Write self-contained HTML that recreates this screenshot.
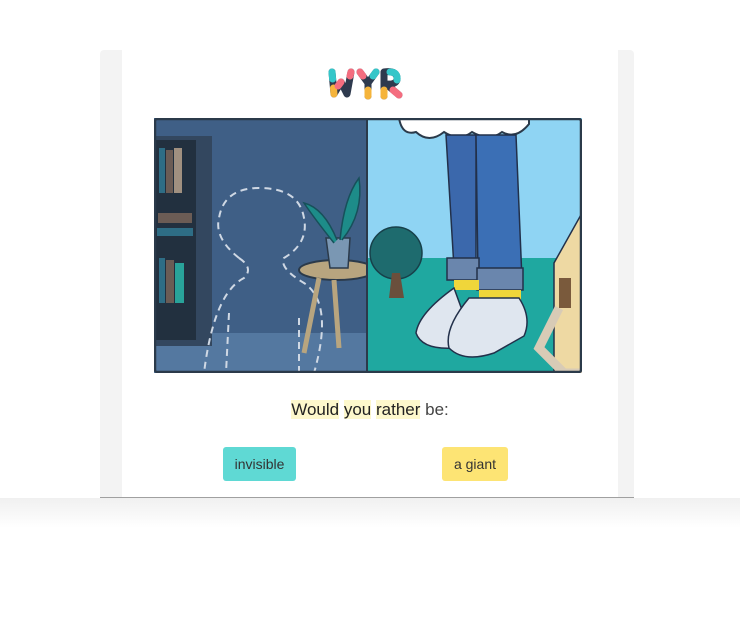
<!DOCTYPE html>
<html><head><style>
body{margin:0;width:740px;height:630px;background:#fff;position:relative;overflow:hidden;font-family:"Liberation Sans",sans-serif}
.frame{position:absolute;left:100px;top:50px;width:534px;height:447px;background:#f3f3f3;border-radius:4px 4px 0 0}
.inner{position:absolute;left:122px;top:50px;width:496px;height:447px;background:#fff}
.line{position:absolute;left:100px;top:497px;width:534px;height:1px;background:#a0a0a0}
.shadow{position:absolute;left:0;top:498px;width:740px;height:30px;background:linear-gradient(#f0f0f0,#fff)}
.q{position:absolute;left:0;width:740px;top:400px;text-align:center;font-size:17px;color:#222}
.q span.h{background:#fdf8cc}
.q span.b{color:#444}
.btn{position:absolute;top:447px;height:34px;line-height:34px;text-align:center;font-size:14px;color:#333;border-radius:3px}
</style></head><body>
<div class="frame"></div><div class="inner"></div>
<div class="line"></div><div class="shadow"></div>
<svg style="position:absolute;left:326px;top:64px" width="84" height="40" viewBox="0 0 84 40">
<g stroke-linecap="round" stroke-linejoin="round" fill="none" stroke-width="7">
<path d="M6 8 L8 30 L15 18 L21 30 L25 8" stroke="#2e3a4e"/>
<path d="M6 8 L6.6 15" stroke="#35c6c9"/><path d="M7.5 24 L8 30" stroke="#f5b43b"/><path d="M12 22 L15 18" stroke="#f46d7f"/><path d="M24 12 L25 8" stroke="#f46d7f"/>
<path d="M34 8 L42 19 L50 8 M42 19 L42 32" stroke="#2e3a4e"/>
<path d="M34 8 L37 12" stroke="#f46d7f"/><path d="M42 26 L42 32" stroke="#f5b43b"/><path d="M47 12 L50 8" stroke="#35c6c9"/>
<path d="M58 32 L58 8 Q72 6 71 16 Q69 21 60 20 L73 31" stroke="#2e3a4e"/>
<path d="M64 8 Q72 8 71 16" stroke="#35c6c9"/><path d="M67 26 L73 31" stroke="#f46d7f"/><path d="M58 26 L58 32" stroke="#f5b43b"/>
</g></svg>
<svg style="position:absolute;left:154px;top:118px" width="428" height="255" viewBox="0 0 428 255">
<rect x="0" y="0" width="213" height="255" fill="#3f5f86"/>
<rect x="0" y="215" width="213" height="40" fill="#5478a0"/>
<rect x="0" y="18" width="58" height="210" fill="#33475f"/>
<rect x="2" y="22" width="40" height="200" fill="#22303f"/>
<rect x="5" y="30" width="6" height="45" fill="#2e6d85"/><rect x="12" y="32" width="7" height="43" fill="#6b5c55"/><rect x="20" y="30" width="8" height="45" fill="#a09080"/>
<rect x="4" y="95" width="34" height="10" fill="#6b5c55"/><rect x="3" y="110" width="36" height="8" fill="#2e6d85"/>
<rect x="5" y="140" width="6" height="45" fill="#2e6d85"/><rect x="12" y="142" width="8" height="43" fill="#6b5c55"/><rect x="21" y="145" width="9" height="40" fill="#29a39a"/>
<g fill="none" stroke="#cfd8e4" stroke-width="2" stroke-dasharray="7 5">
<path d="M85 140 Q60 120 65 100 Q70 70 105 70 Q145 70 150 100 Q155 125 130 140 Q125 150 150 165 Q180 185 160 255"/>
<path d="M85 140 Q100 150 90 160 Q60 175 50 255"/><path d="M75 195 L72 255"/><path d="M145 200 L145 255"/>
</g>
<ellipse cx="183" cy="152" rx="38" ry="10" fill="#b8a57f" stroke="#2b3a4a" stroke-width="2"/>
<path d="M165 160 L150 235 M180 162 L185 230" stroke="#b8a57f" stroke-width="5"/>
<path d="M172 120 L196 120 L194 150 L176 150 Z" fill="#7a97b3" stroke="#2b3a4a" stroke-width="1.5"/>
<path d="M180 125 Q160 100 150 85 Q170 90 183 122 M186 122 Q190 80 205 60 Q210 95 188 122" fill="#1d8c89" stroke="#17505a" stroke-width="1.5"/>
<rect x="213" y="0" width="215" height="255" fill="#8fd4f3"/>
<rect x="213" y="140" width="215" height="115" fill="#1fa8a0"/>
<path d="M245 0 Q248 18 262 14 Q275 26 290 14 Q305 24 318 14 Q335 24 348 14 Q362 22 375 6 L375 0 Z" fill="#fff" stroke="#2b3a4a" stroke-width="2"/>
<path d="M292 17 L300 150 L322 150 L322 17 Z" fill="#3b68ac" stroke="#22304a" stroke-width="1.5"/>
<path d="M322 17 L324 160 L368 162 L362 17 Z" fill="#3b6fb5" stroke="#22304a" stroke-width="1.5"/>
<rect x="293" y="140" width="32" height="22" fill="#6a86ad" stroke="#22304a" stroke-width="1.5"/>
<rect x="323" y="150" width="46" height="22" fill="#6a86ad" stroke="#22304a" stroke-width="1.5"/>
<rect x="300" y="162" width="25" height="10" fill="#f0d63a"/><rect x="325" y="172" width="42" height="10" fill="#f0d63a"/>
<path d="M300 170 Q265 195 262 215 Q268 232 300 230 L320 225 Z" fill="#dfe6ef" stroke="#22304a" stroke-width="1.5"/>
<path d="M315 180 Q290 210 295 230 Q310 245 340 235 L370 218 Q378 200 365 180 Z" fill="#dfe6ef" stroke="#22304a" stroke-width="1.5"/>
<circle cx="242" cy="135" r="26" fill="#1e6b6e" stroke="#17404a" stroke-width="1.5"/>
<path d="M238 155 L235 180 L250 180 L246 155 Z" fill="#6a4f3c"/>
<path d="M400 145 L428 95 L428 255 L400 255 Z" fill="#eed9a3" stroke="#22304a" stroke-width="1.5"/>
<rect x="405" y="160" width="12" height="30" fill="#7a5a3c"/>
<path d="M405 190 Q395 210 385 230 L410 255 L428 255" stroke="#d8cbb6" stroke-width="9" fill="none"/>
<line x1="213" y1="0" x2="213" y2="255" stroke="#2b3a4a" stroke-width="2"/>
<rect x="1" y="1" width="426" height="253" fill="none" stroke="#2b3a4a" stroke-width="2.5" rx="2"/>
</svg>
<div class="q"><span class="h">Would</span> <span class="h">you</span> <span class="h">rather</span> <span class="b">be:</span></div>
<div class="btn" style="left:223px;width:73px;background:#5fd9d4">invisible</div>
<div class="btn" style="left:442px;width:66px;background:#fde474">a giant</div>
</body></html>
